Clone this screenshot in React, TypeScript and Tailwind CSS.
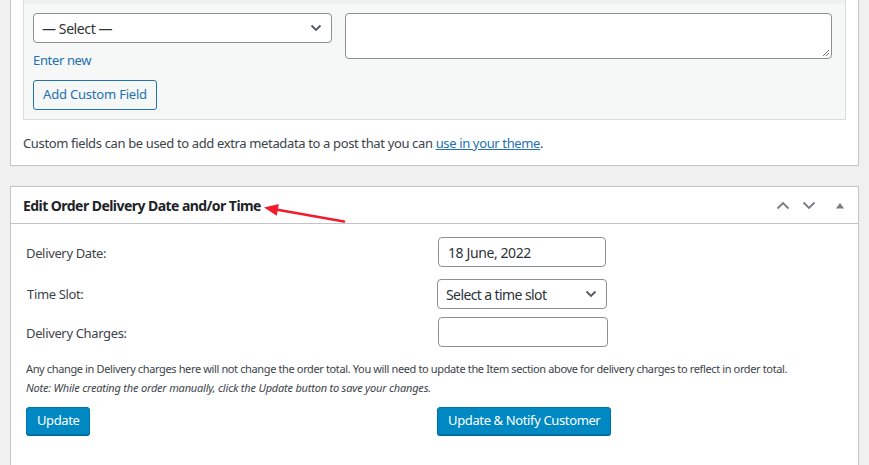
import React from "react";

const font = { fontFamily: '"Noto Sans", "Open Sans", sans-serif' };

function Chevron({ className = "" }: { className?: string }) {
  return (
    <svg width="12" height="8" viewBox="0 0 12 8" className={className}>
      <path d="M1.5 1.5 L6 6 L10.5 1.5" fill="none" stroke="#50575e" strokeWidth="1.8" />
    </svg>
  );
}

export default function App() {
  return (
    <div className="w-[869px] h-[465px] overflow-hidden bg-[#f0f0f1] px-[10px] text-[#3c434a]" style={font}>
      {/* Custom fields panel */}
      <div className="bg-white border-x border-b border-[#c3c4c7] h-[166px] flex flex-col">
        <div className="mx-[12px] bg-[#f6f7f7] border-x border-b border-[#dcdcde] h-[120px] flex flex-col">
          <div className="h-[4px] bg-[#f0f0f1]" />
          <div className="flex pl-[9px] pr-[13px] pt-[9px] gap-[13px]">
            <div className="flex flex-col">
              <div className="w-[299px] h-[30px] bg-white border border-[#8c8f94] rounded-[4px] flex items-center justify-between pl-[8px] pr-[9px] text-[14px] tracking-[-0.4px] text-[#2c3338]">
                <span>— Select —</span>
                <Chevron />
              </div>
              <div className="mt-[8px] text-[13px] tracking-[-0.35px] text-[#2271b1] leading-[18px]">Enter new</div>
              <div className="mt-[11px] w-[124px] h-[30px] border border-[#2271b1] rounded-[3px] bg-[#f6f7f7] text-[#2271b1] text-[13px] tracking-[-0.2px] flex items-center justify-center">
                Add Custom Field
              </div>
            </div>
            <div className="flex-1 h-[46px] bg-white border border-[#8c8f94] rounded-[4px] relative">
              <svg width="8" height="8" viewBox="0 0 8 8" className="absolute right-[1px] bottom-[1px]">
                <path d="M7 1 L1 7 M7 4 L4 7" stroke="#777" strokeWidth="1" />
              </svg>
            </div>
          </div>
        </div>
        <div className="mt-[14px] ml-[12px] text-[13px] tracking-[-0.36px] leading-[18px] text-[#3c434a]">
          Custom fields can be used to add extra metadata to a post that you can{" "}
          <span className="text-[#2271b1] underline">use in your theme</span>.
        </div>
      </div>

      {/* Delivery panel */}
      <div className="mt-[20px] bg-white border border-[#c3c4c7] h-[300px]">
        <div className="h-[37px] border-b border-[#c3c4c7] flex items-center pl-[12px] pr-[12px] relative">
          <span className="text-[14px] font-bold tracking-[-0.55px] text-[#1d2327]">Edit Order Delivery Date and/or Time</span>
          <svg width="96" height="26" viewBox="0 0 96 26" className="absolute left-[241px] top-[12px]">
            <path d="M92 22.5 L24 10.5" stroke="#ef1c2e" strokeWidth="2.6" strokeLinecap="round" />
            <path d="M12 8.5 L26.8 5 L24.8 16.8 Z" fill="#ef1c2e" />
          </svg>
          <div className="ml-auto flex items-center">
            <svg width="14" height="9" viewBox="0 0 14 9" className="mr-[12px]">
              <path d="M1.5 7.5 L7 2 L12.5 7.5" fill="none" stroke="#787c82" strokeWidth="1.8" />
            </svg>
            <svg width="14" height="9" viewBox="0 0 14 9" className="mr-[19px]">
              <path d="M1.5 1.5 L7 7 L12.5 1.5" fill="none" stroke="#787c82" strokeWidth="1.8" />
            </svg>
            <svg width="10" height="7" viewBox="0 0 10 7" className="mr-[1px]">
              <path d="M1 6.5 L5 1 L9 6.5 Z" fill="#787c82" />
            </svg>
          </div>
        </div>
        <div className="pl-[15px] pt-[13px] text-[13px] tracking-[-0.35px] text-[#3c434a]">
          <div className="grid grid-cols-[412px_1fr] items-center">
            <div className="pt-[3px]">Delivery Date:</div>
            <div className="w-[168px] h-[30px] border border-[#8c8f94] rounded-[4px] flex items-center pl-[9px] text-[14px] tracking-[-0.4px] text-[#2c3338]">
              18 June, 2022
            </div>
          </div>
          <div className="grid grid-cols-[411px_1fr] items-center mt-[12px]">
            <div className="pl-[1px] pt-[1px]">Time Slot:</div>
            <div className="w-[170px] h-[30px] border border-[#8c8f94] rounded-[4px] flex items-center justify-between pl-[8px] pr-[9px] text-[14px] tracking-[-0.6px] text-[#2c3338]">
              <span>Select a time slot</span>
              <Chevron />
            </div>
          </div>
          <div className="grid grid-cols-[412px_1fr] items-center mt-[8px]">
            <div className="pt-[3px]">Delivery Charges:</div>
            <div className="w-[170px] h-[30px] border border-[#8c8f94] rounded-[4px]" />
          </div>
          <div className="mt-[12px] text-[11px] leading-[19px] tracking-[-0.37px] text-[#3c434a]">
            Any change in Delivery charges here will not change the order total. You will need to update the Item section above for delivery charges to reflect in order total.
          </div>
          <div className="text-[11px] leading-[19px] italic tracking-[-0.2px] text-[#3c434a]">
            Note: While creating the order manually, click the Update button to save your changes.
          </div>
          <div className="grid grid-cols-[411px_1fr] mt-[10px]">
            <div>
              <div className="inline-flex h-[28px] px-[10px] items-center bg-[#0088c2] border border-[#0073aa] rounded-[3px] text-white text-[13px] tracking-[-0.4px] shadow-[0_1px_0_#006799]">
                Update
              </div>
            </div>
            <div>
              <div className="inline-flex h-[28px] px-[10px] items-center bg-[#0088c2] border border-[#0073aa] rounded-[3px] text-white text-[13px] tracking-[-0.37px] shadow-[0_1px_0_#006799]">
                Update &amp; Notify Customer
              </div>
            </div>
          </div>
        </div>
      </div>
    </div>
  );
}
